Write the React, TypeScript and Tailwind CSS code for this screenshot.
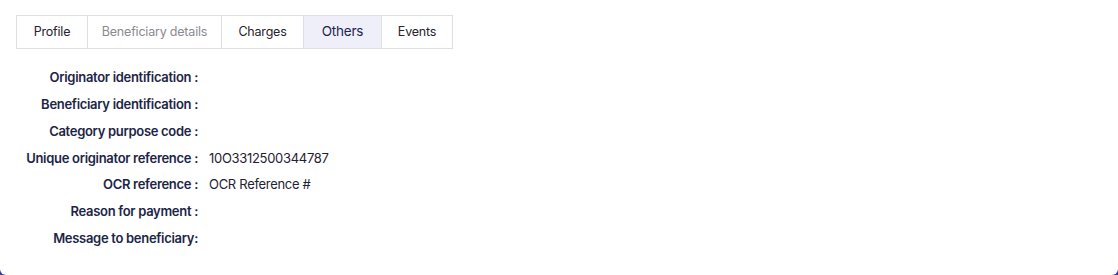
import { useState } from "react";

const tabs: { name: string; width: string }[] = [
  { name: "Profile", width: "w-[70px]" },
  { name: "Beneficiary details", width: "w-[134px]" },
  { name: "Charges", width: "w-[82px]" },
  { name: "Others", width: "w-[78px]" },
  { name: "Events", width: "w-[71px]" },
];

const rows: { label: string; value?: string }[] = [
  { label: "Originator identification :" },
  { label: "Beneficiary identification :" },
  { label: "Category purpose code :" },
  { label: "Unique originator reference :", value: "10O3312500344787" },
  { label: "OCR reference :", value: "OCR Reference #" },
  { label: "Reason for payment :" },
  { label: "Message to beneficiary:" },
];

export default function App() {
  const [active, setActive] = useState("Others");

  return (
    <div className="h-[275px] w-[1118px] bg-[#3f3a9e] font-['Inter',sans-serif]">
      <div className="h-full rounded-b-md bg-white px-4 pt-[15px]">
        <div className="flex w-fit border border-[#dedfe4]">
          {tabs.map((tab, i) => (
            <button
              key={tab.name}
              type="button"
              onClick={() => setActive(tab.name)}
              className={[
                "h-[32px] shrink-0 leading-none tracking-[-0.2px]",
                tab.width,
                i > 0 ? "border-l border-[#dedfe4]" : "",
                tab.name === active ? "bg-[#eeeff8] text-[13.5px] text-[#1c2550]" : "bg-white text-[12.5px]",
                tab.name === "Beneficiary details" ? "text-[#8a8a8f]" : tab.name === active ? "" : "text-[#26222e]",
              ].join(" ")}
            >
              {tab.name}
            </button>
          ))}
        </div>

        <div className="mt-[20px] flex flex-col gap-[8.8px]">
          {rows.map((row) => (
            <div key={row.label} className="flex h-[18px] items-center text-[13px] tracking-[-0.3px]">
              <div className="w-[182px] shrink-0 text-right font-semibold text-[#1c2547]">{row.label}</div>
              <div className="pl-[11px] text-[#1f2233]">{row.value ?? ""}</div>
            </div>
          ))}
        </div>
      </div>
    </div>
  );
}
